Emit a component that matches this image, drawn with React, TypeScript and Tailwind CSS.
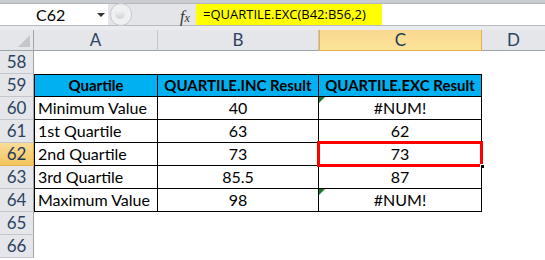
import React from "react";

const font = { fontFamily: "Lato, 'Liberation Sans', sans-serif" };

const rows: { n: number; a: string; b: string; c: string; tri?: boolean }[] = [
  { n: 60, a: "Minimum Value", b: "40", c: "#NUM!", tri: true },
  { n: 61, a: "1st Quartile", b: "63", c: "62" },
  { n: 62, a: "2nd Quartile", b: "73", c: "73" },
  { n: 63, a: "3rd Quartile", b: "85.5", c: "87" },
  { n: 64, a: "Maximum Value", b: "98", c: "#NUM!", tri: true },
];

function RowHead({ n, sel }: { n: number; sel?: boolean }) {
  return (
    <div
      className={
        "w-[34px] shrink-0 h-full flex items-center justify-center border-r border-b text-[17px] font-normal " +
        (sel
          ? "bg-gradient-to-b from-[#f9dc98] to-[#f4c55e] border-r-[#e2a83a] border-b-[#e6b34c] text-[#233a57]"
          : "bg-[#e4e6ea] border-r-[#9ea3aa] border-b-[#c3c6cb] text-[#2b4361]")
      }
    >
      {n}
    </div>
  );
}

export default function App() {
  return (
    <div className="w-[545px] h-[260px] bg-white overflow-hidden relative" style={font}>
      {/* formula bar */}
      <div className="h-[4px] bg-[#c9ccd1] border-b border-[#b5b9bf]" />
      <div className="h-[22px] flex bg-[#e3e5e9] border-b border-[#b7bbc1]">
        <div className="w-[108px] bg-white flex items-center relative">
          <span className="ml-[36px] text-[16px] text-black">C62</span>
          <svg className="absolute left-[97px] top-[9px]" width="8" height="5" viewBox="0 0 8 5">
            <path d="M0 0 L8 0 L4 4 Z" fill="#333" />
          </svg>
        </div>
        <div className="w-[88px] flex items-center relative">
          <div className="absolute left-[2px] top-[-1px] w-[22px] h-[23px] rounded-full bg-[#eef0f2] border border-[#c6c9ce]" />
          <div className="absolute left-[7px] top-[5px] w-[10px] h-[10px] rounded-full bg-gradient-to-b from-[#f5f6f7] to-[#d0d3d7]" />
          <span
            className="absolute left-[72px] top-[1px] text-[16px] italic text-[#333]"
            style={{ fontFamily: "'Liberation Serif', serif" }}
          >
            f<span className="text-[12px]">x</span>
          </span>
        </div>
        <div
          className="w-[186px] bg-[#ffff00] flex items-center pl-[7px] text-[13px] text-black whitespace-nowrap"
          style={{ fontFamily: "'Open Sans', sans-serif" }}
        >
          =QUARTILE.EXC(B42:B56,2)
        </div>
        <div className="flex-1 bg-white" />
      </div>
      <div className="h-[4px] bg-[#e9ebee]" />
      {/* column headers */}
      <div className="h-[21px] flex text-[17px] text-[#2b4361]">
        <div className="w-[34px] shrink-0 bg-[#e4e6ea] border-r border-b border-[#9ea3aa] relative">
          <svg className="absolute right-[3px] bottom-[3px]" width="12" height="12" viewBox="0 0 12 12">
            <path d="M12 0 L12 12 L0 12 Z" fill="#c3c6cb" />
          </svg>
        </div>
        <div className="w-[124px] bg-[#e4e6ea] border-r border-b border-[#c3c6cb] border-b-[#9ea3aa] flex items-center justify-center">A</div>
        <div className="w-[161px] bg-[#e4e6ea] border-r border-b border-[#c3c6cb] border-b-[#9ea3aa] flex items-center justify-center">B</div>
        <div className="w-[163px] bg-gradient-to-b from-[#f9d88f] to-[#fbe49a] border-x border-b border-[#e2b04a] flex items-center justify-center text-[#233a57]">C</div>
        <div className="flex-1 bg-[#e4e6ea] border-b border-[#9ea3aa] flex items-center justify-center">D</div>
      </div>
      {/* row 58 */}
      <div className="h-[23px] flex">
        <RowHead n={58} />
        <div className="flex-1" />
      </div>
      {/* row 59 header */}
      <div className="h-[23px] flex text-[15px] font-bold text-black whitespace-nowrap">
        <RowHead n={59} />
        <div className="w-[124px] bg-[#00b0f0] border border-black flex items-center justify-center">Quartile</div>
        <div className="w-[161px] bg-[#00b0f0] border-y border-r border-black flex items-center justify-center">QUARTILE.INC Result</div>
        <div className="w-[163px] bg-[#00b0f0] border-y border-r border-black flex items-center justify-center">QUARTILE.EXC Result</div>
      </div>
      {rows.map((r) => (
        <div key={r.n} className="h-[23px] flex text-[16px] text-black whitespace-nowrap">
          <RowHead n={r.n} sel={r.n === 62} />
          <div className="w-[124px] border-x border-b border-black flex items-center pl-[3px]">{r.a}</div>
          <div className="w-[161px] border-r border-b border-black flex items-center justify-center">{r.b}</div>
          <div className="w-[163px] border-r border-b border-black flex items-center justify-center relative">
            {r.tri && (
              <svg className="absolute left-0 top-0" width="6" height="6" viewBox="0 0 6 6">
                <path d="M0 0 L6 0 L0 6 Z" fill="#1f7a2e" />
              </svg>
            )}
            {r.c}
            {r.n === 62 && (
              <>
                <div className="absolute left-[-2px] top-[-2px] right-[-2px] bottom-[-2px] border-[3px] border-[#ff0000]" />
                <div className="absolute right-[-4px] bottom-[-4px] w-[5px] h-[5px] bg-black border border-white" />
              </>
            )}
          </div>
        </div>
      ))}
      <div className="h-[23px] flex">
        <RowHead n={65} />
        <div className="flex-1" />
      </div>
      <div className="h-[23px] flex">
        <RowHead n={66} />
        <div className="flex-1" />
      </div>
    </div>
  );
}
